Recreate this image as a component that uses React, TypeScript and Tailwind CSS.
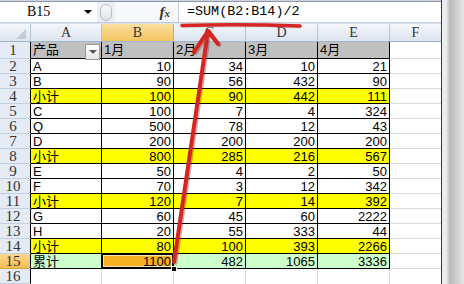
import React from 'react';

type DataRow = { label: string; v: number[]; kind?: 'sub' | 'total' };

const rows: DataRow[] = [
  { label: 'A', v: [10, 34, 10, 21] },
  { label: 'B', v: [90, 56, 432, 90] },
  { label: '小计', v: [100, 90, 442, 111], kind: 'sub' },
  { label: 'C', v: [100, 7, 4, 324] },
  { label: 'Q', v: [500, 78, 12, 43] },
  { label: 'D', v: [200, 200, 200, 200] },
  { label: '小计', v: [800, 285, 216, 567], kind: 'sub' },
  { label: 'E', v: [50, 4, 2, 50] },
  { label: 'F', v: [70, 3, 12, 342] },
  { label: '小计', v: [120, 7, 14, 392], kind: 'sub' },
  { label: 'G', v: [60, 45, 60, 2222] },
  { label: 'H', v: [20, 55, 333, 44] },
  { label: '小计', v: [80, 100, 393, 2266], kind: 'sub' },
  { label: '累计', v: [1100, 482, 1065, 3336], kind: 'total' },
];

const letters = ['B', 'C', 'D', 'E'];

const RowHead = ({ n, active }: { n: number; active?: boolean }) => (
  <div
    className={`w-[31px] h-full shrink-0 flex items-center justify-center pr-[4px] border-r border-b border-r-black font-['Liberation_Serif',serif] text-[15px] leading-[14px] text-[#333] ${
      active
        ? 'bg-[linear-gradient(#fbd68e,#f3bd55)] border-b-[#d9a441]'
        : 'bg-[#e4ebf5] border-b-[#c3d0e1]'
    }`}
  >
    {n}
  </div>
);

const FormulaBar = () => (
  <>
    <div className="h-[5px] bg-[#cdd3df] border-b border-[#8e98aa]" />
    <div className="h-[21px] flex items-center bg-white border-b border-[#c4cbd6]">
      {/* Name box */}
      <div className="w-[97px] h-full flex items-center">
        <span className="ml-[27px] font-['Liberation_Serif',serif] text-[14px] text-black leading-none">B15</span>
        <span className="ml-auto mr-[5px] w-0 h-0 border-l-[4px] border-r-[4px] border-t-[4px] border-l-transparent border-r-transparent border-t-black" />
      </div>
      {/* Splitter */}
      <div className="w-[18px] h-full flex items-center justify-center bg-[#eceef2]">
        <div className="w-[12px] h-[17px] rounded-full border border-[#b6bcc6] bg-[linear-gradient(#fbfbfc,#dfe2e7)]" />
      </div>
      {/* fx */}
      <div className="w-[63px] h-full flex items-center justify-end pr-[8px] bg-[#f7f8fa]">
        <span className="font-['Liberation_Serif',serif] italic font-bold text-[15px] leading-none text-[#333]">
          f<span className="text-[11px]">x</span>
        </span>
      </div>
      <div className="w-px h-full bg-[#c9ced7]" />
      <div className="flex-1 h-full flex items-center pl-[8px] font-['Liberation_Mono',monospace] text-[13.4px] text-black">
        =SUM(B2:B14)/2
      </div>
    </div>
    <div className="h-[3px] bg-[#dde3ec]" />
  </>
);

const ColumnHeaders = () => (
  <div className="flex h-[18px] border-b border-[#9eb6ce] bg-[linear-gradient(#f4f7fb,#dce4ef)] font-['Liberation_Serif',serif] text-[14px] text-[#333]">
    <div className="w-[31px] h-full border-r border-[#b5c4d7] flex items-end justify-end pr-[4px] pb-[2px]">
      <svg width="10" height="10" viewBox="0 0 10 10">
        <polygon points="10,0 10,10 0,10" fill="#c4cbd6" />
      </svg>
    </div>
    <div className="w-[71px] h-full border-r border-[#b5c4d7] flex items-center justify-center">A</div>
    <div className="w-[72px] h-full border-r border-[#d9aa4c] flex items-center justify-center bg-[linear-gradient(#fbe0a0,#f3c462)]">B</div>
    <div className="w-[72px] h-full border-r border-[#b5c4d7] flex items-center justify-center">C</div>
    <div className="w-[72px] h-full border-r border-[#b5c4d7] flex items-center justify-center">D</div>
    <div className="w-[72px] h-full border-r border-[#b5c4d7] flex items-center justify-center">E</div>
    <div className="flex-1 h-full flex items-center justify-center">F</div>
  </div>
);

const HeaderRow = () => (
  <div className="flex h-[20px] font-['Liberation_Sans','Noto_Sans_CJK_SC',sans-serif] text-[13px] text-black">
    <RowHead n={1} />
    <div className="w-[71px] h-full border-r border-b border-black bg-[#c0c0c0] flex items-end pl-[2px] pb-[1px] relative">
      <span className="leading-[15px]">产品</span>
      <div className="absolute right-[1px] top-[2px] w-[15px] h-[16px] border border-[#9a9a9a] bg-[linear-gradient(#ffffff,#e6e6e6)] flex items-center justify-center">
        <span className="w-0 h-0 border-l-[4px] border-r-[4px] border-t-[4px] border-l-transparent border-r-transparent border-t-[#555]" />
      </div>
    </div>
    {['1月', '2月', '3月', '4月'].map((m) => (
      <div key={m} className="w-[72px] h-full border-r border-b border-black bg-[#c0c0c0] flex items-end pl-[2px] pb-[1px]">
        <span className="leading-[15px]">{m}</span>
      </div>
    ))}
    <div className="flex-1 h-full border-b border-[#dadcdd] bg-white" />
  </div>
);

const Annotation = () => (
  <svg width="464" height="284" className="absolute left-0 top-0 pointer-events-none">
    <path d="M183 26.5 Q 242 25 300 27" stroke="#9a9a9a" strokeOpacity="0.35" strokeWidth="3" strokeLinecap="round" fill="none" />
    <path d="M182 25.5 Q 241 24 300 26" stroke="#d62621" strokeWidth="3.5" strokeLinecap="round" fill="none" />
    <g stroke="#7a1a14" strokeOpacity="0.35" strokeWidth="4" strokeLinecap="round" strokeLinejoin="round" fill="none">
      <path d="M175.5 263 L209.5 32" />
      <path d="M195.5 53 L209.5 32 L219.5 45" />
    </g>
    <g stroke="#d42520" strokeWidth="4" strokeLinecap="round" strokeLinejoin="round" fill="none">
      <path d="M174 262 L208 31" />
      <path d="M194 52 L208 31 L218 44" />
    </g>
  </svg>
);

export default function App() {
  return (
    <div className="relative w-[464px] h-[284px] overflow-hidden bg-white flex">
      <div className="w-[442px] h-full shrink-0 border-r border-[#3a3a3a] flex flex-col">
        <FormulaBar />
        <ColumnHeaders />
        <HeaderRow />

        {rows.map((r, i) => {
          const n = i + 2;
          const bg = r.kind === 'sub' ? 'bg-[#ffff00]' : r.kind === 'total' ? 'bg-[#ccffcc]' : 'bg-white';
          return (
            <div key={n} className="flex h-[15px] shrink-0 font-['Liberation_Sans','Noto_Sans_CJK_SC',sans-serif] text-[13px] leading-[15px] text-black">
              <RowHead n={n} active={n === 15} />
              <div className={`w-[71px] h-full border-r border-b border-black pl-[2px] ${bg}`}>{r.label}</div>
              {r.v.map((v, j) => {
                const selected = r.kind === 'total' && j === 0;
                return (
                  <div
                    key={letters[j]}
                    className={`w-[72px] h-full border-r border-b border-black text-right pr-[2px] ${
                      selected ? 'bg-[#f5b120] relative' : bg
                    }`}
                  >
                    {v}
                    {selected && (
                      <>
                        <div className="absolute -top-px -left-px -right-px -bottom-px border-2 border-black shadow-[inset_0_0_0_1px_#f7e3b5]" />
                        <div className="absolute -right-[4px] -bottom-[4px] w-[6px] h-[6px] bg-black border border-white" />
                      </>
                    )}
                  </div>
                );
              })}
              <div className="flex-1 h-full border-b border-[#dadcdd] bg-white" />
            </div>
          );
        })}

        {/* row 16, cut off */}
        <div className="flex h-[15px] shrink-0">
          <RowHead n={16} />
          <div className="w-[71px] h-full border-r border-[#dadcdd]" />
          <div className="w-[72px] h-full border-r border-[#dadcdd]" />
          <div className="w-[72px] h-full border-r border-[#dadcdd]" />
          <div className="w-[72px] h-full border-r border-[#dadcdd]" />
          <div className="w-[72px] h-full border-r border-[#dadcdd]" />
          <div className="flex-1 h-full" />
        </div>
      </div>
      <div className="flex-1 h-full bg-[linear-gradient(to_right,#ededed_0px,#ededed_4px,#b9b9b9_8px,#e6e6e6_22px)]" />
      <Annotation />
    </div>
  );
}
